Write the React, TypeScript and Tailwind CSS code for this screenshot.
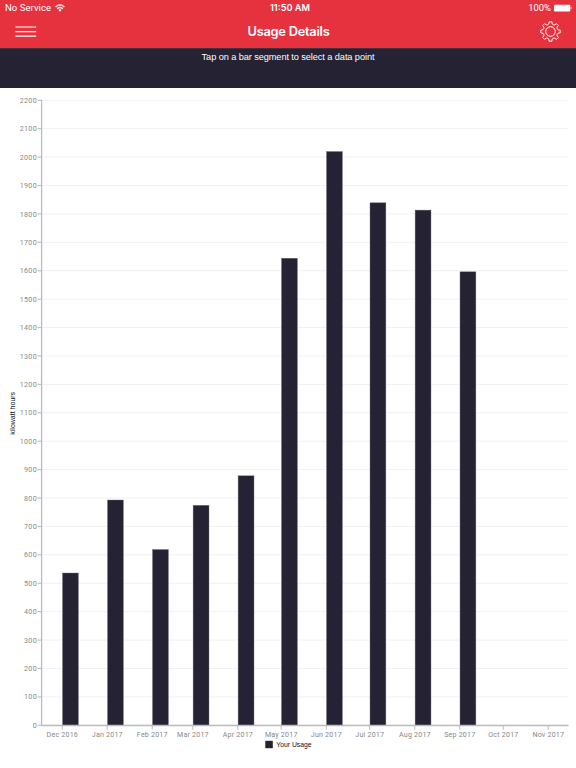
type Usage = {
  month: string;
  x: number;
  top?: number;
};

const usage: Usage[] = [
  { month: 'Dec 2016', x: 62.2, top: 573 },
  { month: 'Jan 2017', x: 107.2, top: 500 },
  { month: 'Feb 2017', x: 152.2, top: 549.5 },
  { month: 'Mar 2017', x: 192.8, top: 505.3 },
  { month: 'Apr 2017', x: 237.8, top: 475.8 },
  { month: 'May 2017', x: 281.2, top: 258.2 },
  { month: 'Jun 2017', x: 326.2, top: 151.5 },
  { month: 'Jul 2017', x: 369.7, top: 202.8 },
  { month: 'Aug 2017', x: 414.8, top: 210.1 },
  { month: 'Sep 2017', x: 459.7, top: 271.8 },
  { month: 'Oct 2017', x: 503.3 },
  { month: 'Nov 2017', x: 548.2 },
];

const steps = Array.from({ length: 23 }, (_, i) => i * 100);
const BASE = 637.3;
const STEP = 28.41;

// Outline of the eight-toothed settings wheel
const gearPath = () => {
  const pt = (r: number, deg: number) => {
    const a = (deg * Math.PI) / 180;
    return `${(r * Math.cos(a)).toFixed(2)} ${(r * Math.sin(a)).toFixed(2)}`;
  };
  let d = '';
  for (let i = 0; i < 8; i++) {
    const c = i * 45;
    d += `${i === 0 ? 'M' : 'L'}${pt(9.8, c - 8)} L${pt(9.8, c + 8)} L${pt(7.9, c + 12)} Q${pt(6.9, c + 22.5)} ${pt(7.9, c + 33)} `;
  }
  return d + 'Z';
};

const StatusBar = () => (
  <div className="flex h-4 items-center justify-between pl-[5px] pr-1 text-white">
    <div className="flex w-40 items-center gap-1">
      <span className="w-[46px] whitespace-nowrap font-[Roboto,sans-serif] text-[9.6px] tracking-[0.02px]">No Service</span>
      <svg width="10" height="8" viewBox="0 0 10 8" fill="none" stroke="white" strokeWidth="1.25">
        <path d="M0.6 3 Q5 -1.1 9.4 3" />
        <path d="M2.2 4.8 Q5 2.2 7.8 4.8" />
        <path d="M3.4 6 Q5 4.7 6.6 6 L5 7.7 Z" fill="white" stroke="none" />
      </svg>
    </div>
    <span className="pl-[3px] text-[9.2px] font-semibold">11:50 AM</span>
    <div className="flex w-40 items-center justify-end gap-[3px]">
      <span className="font-[Roboto,sans-serif] text-[9.4px]">100%</span>
      <svg width="18" height="8" viewBox="0 0 18 8" fill="white">
        <rect x="0" y="0.8" width="16.3" height="6.6" rx="1" />
        <path d="M16.9 2.8 Q18.3 4 16.9 5.3 Z" />
      </svg>
    </div>
  </div>
);

const Navbar = () => (
  <nav className="flex h-[30px] items-center justify-between pl-[15px] pr-[15px]">
    <button aria-label="Menu">
      <svg className="block" width="22" height="13" viewBox="0 0 22 13" stroke="white" strokeWidth="1.2">
        <path d="M0.5 2H21.2M0.5 6.6H21.2M0.5 11.2H21.2" />
      </svg>
    </button>
    <h1 className="pt-[2px] text-[12.8px] font-semibold tracking-[-0.24px] text-white">Usage Details</h1>
    <button aria-label="Settings">
      <svg width="21" height="21" viewBox="-10.5 -10.5 21 21" fill="none" stroke="white" strokeWidth="1" strokeLinejoin="round">
        <path d={gearPath()} />
        <circle r="4.8" />
      </svg>
    </button>
  </nav>
);

const UsageChart = () => (
  <svg className="block" width="576" height="680" viewBox="0 0 576 680">
    {/* Grid and y axis */}
    {steps.map((value, i) => {
      const y = BASE - i * STEP;
      return (
        <g key={value}>
          <path d={`M42 ${y}H568`} stroke="#f1f1f1" />
          <path d={`M37.5 ${y}H41.5`} stroke="#bcbcbc" strokeWidth="1.1" />
          <text x="37" y={y + 2.6} textAnchor="end" fontSize="7.1" letterSpacing="0.35" fill="#888888" className="font-[Roboto,sans-serif]">
            {value}
          </text>
        </g>
      );
    })}

    {/* Bars and x axis */}
    {usage.map(({ month, x, top }) => (
      <g key={month}>
        {top !== undefined && (
          <rect x={x + 0.3} y={top - 88} width="15.9" height={BASE - top + 88} fill="#252233" stroke="#777481" strokeWidth="0.4" />
        )}
        <path d={`M${x} ${BASE}v4.5`} stroke="#bcbcbc" />
        <text x={x + 0.1} y="649.2" textAnchor="middle" fontSize="7.1" letterSpacing="0.2" fill="#888888" className="font-[Roboto,sans-serif]">
          {month}
        </text>
      </g>
    ))}
    <path d="M41.6 11.8V637.5H568.5" fill="none" stroke="#bbbbbb" strokeWidth="1.3" />

    <text
      transform="translate(15.2 325.3) rotate(-90)"
      textAnchor="middle"
      fontSize="7"
      fill="#111111"
      className="font-['Liberation_Sans',sans-serif]"
    >
      kilowatt hours
    </text>

    {/* Legend */}
    <rect x="265.3" y="652.8" width="7.5" height="7.4" fill="#252233" />
    <text x="276.3" y="659.4" fontSize="6.8" fill="#111111" className="font-['Liberation_Sans',sans-serif]">
      Your Usage
    </text>
  </svg>
);

const App = () => {
  return (
    <div className="h-[768px] w-[576px] overflow-hidden bg-white font-[Inter,sans-serif]">
      <header className="h-12 bg-[#e6323e]">
        <StatusBar />
        <Navbar />
      </header>
      <div className="h-10 border-t border-[#45303d] bg-[#252233] pt-[2px] text-center font-['Liberation_Sans',sans-serif] text-[9.2px] leading-[13px] tracking-[-0.08px] text-white">
        Tap on a bar segment to select a data point
      </div>
      <UsageChart />
    </div>
  );
};

export default App;
